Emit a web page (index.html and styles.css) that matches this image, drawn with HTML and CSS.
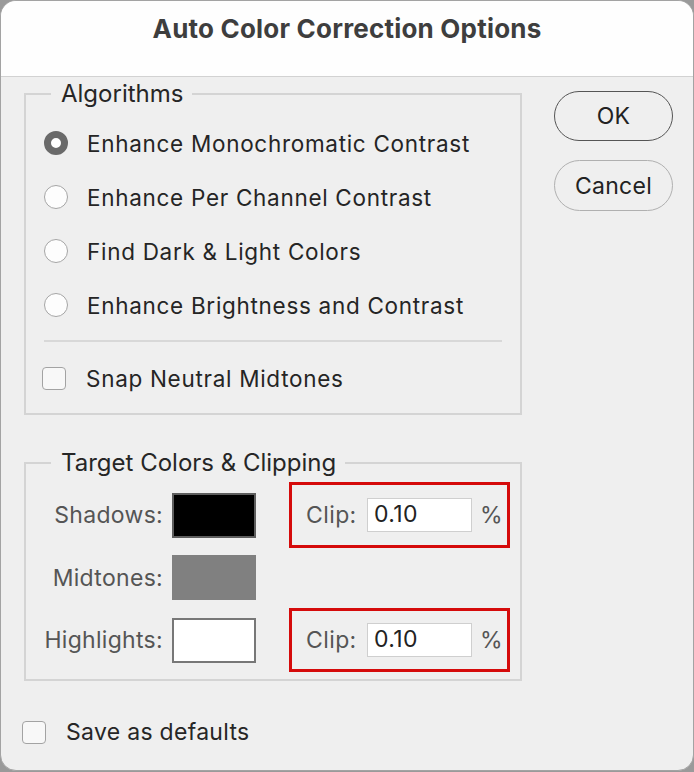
FILE: index.html
```html
<!DOCTYPE html>
<html>
<head>
<meta charset="utf-8">
<link rel="stylesheet" href="styles.css">
</head>
<body>
<div class="window">
  <div class="titlebar">Auto Color Correction Options</div>
  <div class="main">
    <div class="left">
      <fieldset class="group algos">
        <legend>Algorithms</legend>
        <div class="radio-row"><span class="radio checked"></span><span class="rlabel">Enhance Monochromatic Contrast</span></div>
        <div class="radio-row"><span class="radio"></span><span class="rlabel">Enhance Per Channel Contrast</span></div>
        <div class="radio-row"><span class="radio"></span><span class="rlabel">Find Dark &amp; Light Colors</span></div>
        <div class="radio-row"><span class="radio"></span><span class="rlabel">Enhance Brightness and Contrast</span></div>
        <div class="sep"></div>
        <div class="check-row"><span class="check"></span><span class="rlabel">Snap Neutral Midtones</span></div>
      </fieldset>
      <fieldset class="group targets">
        <legend>Target Colors &amp; Clipping</legend>
        <div class="trow r1">
          <span class="tlabel">Shadows:</span>
          <span class="swatch black"></span>
          <div class="clipbox"><span class="cliplabel">Clip:</span><span class="input">0.10</span><span class="pct">%</span></div>
        </div>
        <div class="trow r2">
          <span class="tlabel">Midtones:</span>
          <span class="swatch gray"></span>
        </div>
        <div class="trow r3">
          <span class="tlabel">Highlights:</span>
          <span class="swatch white"></span>
          <div class="clipbox"><span class="cliplabel">Clip:</span><span class="input">0.10</span><span class="pct">%</span></div>
        </div>
      </fieldset>
    </div>
    <div class="right">
      <div class="btn ok">OK</div>
      <div class="btn cancel">Cancel</div>
    </div>
  </div>
  <div class="save-row"><span class="check"></span><span class="slabel">Save as defaults</span></div>
</div>
</body>
</html>
```
FILE: styles.css
```css
* { box-sizing: border-box; }
html, body { margin: 0; padding: 0; }
body {
  background: #9a9a9a;
  font-family: Inter, "Noto Sans", sans-serif;
  width: 694px;
  height: 772px;
}
.window {
  width: 694px;
  height: 771px;
  background: #efefef;
  border: 1px solid #a3a3a3;
  border-radius: 16px;
  overflow: hidden;
}
.titlebar {
  height: 76px;
  background: #fefefe;
  border-bottom: 1px solid #d2d2d2;
  text-align: center;
  font-weight: 700;
  font-size: 26px;
  color: #3e3e3e;
  padding-top: 12px;
  line-height: 32px;
  letter-spacing: 0.2px;
}
.main {
  display: flex;
  padding-left: 23px;
  gap: 32px;
}
.left { width: 498px; }
.group {
  margin: 0;
  padding: 0 18px;
  border: 2px solid #d4d4d4;
  min-width: 0;
}
.group legend {
  margin-left: 7px;
  padding: 0 9px 0 10px;
  font-size: 24px;
  line-height: 28px;
  color: #262626;
  letter-spacing: 0;
}
.algos { margin-top: 3px; padding-top: 8px; padding-bottom: 15px; }
.radio-row {
  height: 54px;
  display: flex;
  align-items: center;
}
.radio {
  width: 24px;
  height: 24px;
  border-radius: 50%;
  background: #fdfdfd;
  border: 1.5px solid #a5a5a5;
  flex: none;
}
.radio.checked {
  background: #fff;
  border: 7.5px solid #6a6a6a;
}
.rlabel {
  margin-left: 19px;
  font-size: 22.5px;
  color: #252525;
  letter-spacing: 0.7px;
}
.sep {
  height: 2px;
  background: #d8d8d8;
  margin-top: 8px;
}
.check-row {
  margin-top: 16px;
  height: 40px;
  display: flex;
  align-items: center;
  margin-left: -2px;
}
.check {
  width: 24px;
  height: 23px;
  border-radius: 4px;
  border: 1.5px solid #a3a3a3;
  background: #f8f8f8;
  flex: none;
}
.check-row .rlabel { margin-left: 20px; }
.targets {
  margin-top: 34px;
  padding: 5px 10px 7px 0;
}
.targets legend { margin-left: 25px; }
.trow {
  display: flex;
  align-items: center;
}
.trow.r1 { height: 66px; }
.trow.r2 { height: 45px; margin-top: 7px; }
.trow.r3 { height: 64px; margin-top: 8px; }
.tlabel {
  width: 137px;
  text-align: right;
  font-size: 23px;
  color: #555;
  letter-spacing: 0.3px;
  white-space: nowrap;
}
.swatch {
  margin-left: 9px;
  width: 84px;
  height: 45px;
  flex: none;
}
.swatch.black { background: #000; border: 2px solid #5e5e5e; }
.swatch.gray { background: #808080; }
.swatch.white { background: #fff; border: 2px solid #777; }
.clipbox {
  margin-left: 33px;
  width: 221px;
  height: 100%;
  border: 3px solid #d50b0b;
  display: flex;
  align-items: center;
  padding-left: 14px;
}
.cliplabel {
  font-size: 23px;
  color: #555;
  width: 61px;
  letter-spacing: 0.4px;
}
.input {
  width: 105px;
  height: 34px;
  background: #fff;
  border: 1.5px solid #cfcfcf;
  font-size: 23px;
  color: #222;
  padding-left: 6px;
  line-height: 31px;
  letter-spacing: 0.4px;
}
.pct {
  margin-left: 8px;
  font-size: 23px;
  color: #555;
}
.right {
  width: 119px;
  padding-top: 14px;
  display: flex;
  flex-direction: column;
  gap: 19px;
}
.btn {
  height: 51px;
  border-radius: 26px;
  display: flex;
  align-items: center;
  justify-content: center;
  font-size: 23px;
  color: #222;
  letter-spacing: 0.3px;
}
.btn.ok { border: 1.5px solid #555; height: 50px; }
.btn.cancel { border: 1.5px solid #b0b0b0; }
.save-row {
  display: flex;
  align-items: center;
  height: 40px;
  margin-top: 31px;
  padding-left: 21px;
}
.slabel {
  margin-left: 20px;
  font-size: 23px;
  color: #262626;
  letter-spacing: 0.3px;
}
```
